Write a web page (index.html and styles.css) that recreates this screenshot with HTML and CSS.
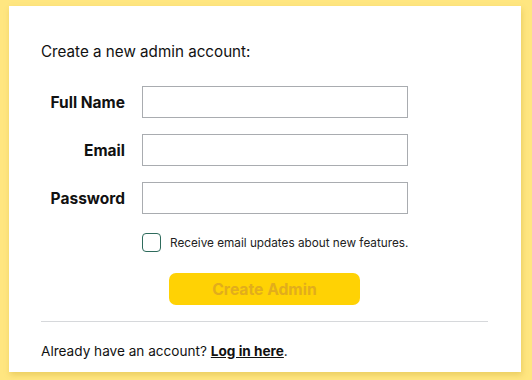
FILE: index.html
```html
<!DOCTYPE html>
<html>
<head>
<meta charset="utf-8">
<link rel="stylesheet" href="styles.css">
</head>
<body>
<div class="card">
  <p class="title">Create a new admin account:</p>
  <form class="form">
    <label class="label" for="name">Full Name</label>
    <input class="input" id="name" type="text">
    <label class="label" for="email">Email</label>
    <input class="input" id="email" type="text">
    <label class="label" for="pw">Password</label>
    <input class="input" id="pw" type="password">
    <div class="check-row">
      <span class="checkbox"></span>
      <span class="check-text">Receive email updates about new features.</span>
    </div>
  </form>
  <div class="actions">
    <button class="btn" type="button">Create Admin</button>
  </div>
  <hr class="divider">
  <p class="footer">Already have an account? <a class="link" href="#">Log in here</a>.</p>
</div>
</body>
</html>
```
FILE: styles.css
```css
html, body {
  margin: 0;
  padding: 0;
}
body {
  background: #ffe680;
  font-family: Inter, "Noto Sans", sans-serif;
  color: #111;
  padding: 6px 11px 0 9px;
  height: 380px;
  box-sizing: border-box;
}
.card {
  background: #fff;
  width: 512px;
  height: 366px;
  box-sizing: border-box;
  padding: 34px 33px 0 32px;
  box-shadow: 1px 3px 6px rgba(170, 130, 0, 0.25);
}
.title {
  margin: 0 0 22px;
  font-size: 15.2px;
  line-height: 24px;
}
.form {
  display: grid;
  grid-template-columns: 84px 266px;
  column-gap: 17px;
  row-gap: 16px;
  align-items: center;
}
.label {
  font-weight: 700;
  font-size: 15.5px;
  text-align: right;
}
.input {
  height: 32px;
  box-sizing: border-box;
  border: 1px solid #a9acb0;
  border-radius: 0;
  margin: 0;
  padding: 4px 8px;
  font: inherit;
}
.check-row {
  grid-column: 2;
  display: flex;
  align-items: center;
  gap: 9px;
  margin-top: 3px;
  white-space: nowrap;
}
.checkbox {
  flex: none;
  width: 19px;
  height: 19px;
  box-sizing: border-box;
  border: 1.5px solid #2e6b5c;
  border-radius: 4px;
}
.check-text {
  font-size: 11.75px;
  color: #222;
}
.actions {
  display: flex;
  justify-content: center;
  margin-top: 21px;
}
.btn {
  width: 191px;
  height: 32px;
  border: none;
  border-radius: 7px;
  background: #ffd204;
  color: #e2ad1c;
  font-family: Inter, sans-serif;
  font-weight: 700;
  font-size: 15.7px;
  padding: 0;
}
.divider {
  border: none;
  border-top: 1px solid #d6d8db;
  margin: 16px 0 0;
  height: 0;
}
.footer {
  margin: 19px 0 0;
  font-size: 13.6px;
  line-height: 20px;
}
.link {
  color: #111;
  font-weight: 700;
  text-decoration: underline;
}
```
